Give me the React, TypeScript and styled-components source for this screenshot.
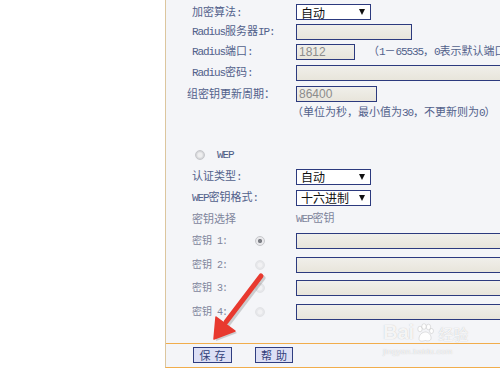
import React from "react";
import styled, { createGlobalStyle } from "styled-components";

const GlobalStyle = createGlobalStyle`
  html, body { margin: 0; padding: 0; background: #ffffff; overflow: hidden; }
  #root { width: 500px; height: 376px; }
`;

const Page = styled.div`
  position: relative;
  width: 500px;
  height: 376px;
  overflow: hidden;
  display: flex;
  align-items: flex-start;
  padding-left: 165px;
  box-sizing: border-box;
  background: #ffffff;
  font-family: "Noto Sans CJK SC", sans-serif;
`;

const Panel = styled.div`
  flex: none;
  width: 360px;
  box-sizing: border-box;
  border-left: 1px solid #dcc69e;
  border-bottom: 1px solid #f1ad4c;
  background: #f4f5f8;
  display: flex;
  flex-direction: column;
`;

const Form = styled.div`
  display: flex;
  flex-direction: column;
  padding: 2px 0 20px 26px;
`;

const Row = styled.div<{ $h: number }>`
  display: flex;
  align-items: center;
  flex: none;
  height: ${(p) => p.$h}px;
  white-space: nowrap;
`;

const Label = styled.div<{ $shift?: number; $muted?: boolean; $size?: number; $w?: number }>`
  flex: none;
  width: ${(p) => (p.$w ?? 104) + (p.$shift ?? 0)}px;
  margin-left: ${(p) => -(p.$shift ?? 0)}px;
  font-size: ${(p) => p.$size ?? 11}px;
  line-height: 1;
  color: ${(p) => (p.$muted ? "#7f859c" : "#52618b")};
  white-space: nowrap;
`;

const Lat = styled.span`
  font-family: "Liberation Mono", monospace;
  letter-spacing: -0.1em;
`;

const Hint = styled.div<{ $ml?: number }>`
  font-size: 11px;
  line-height: 1;
  color: #52618b;
  margin-left: ${(p) => p.$ml ?? 0}px;
  white-space: nowrap;
`;

const Spacer = styled.div<{ $h: number }>`
  flex: none;
  height: ${(p) => p.$h}px;
`;

const SelectBox = styled.div`
  flex: none;
  box-sizing: border-box;
  width: 75px;
  height: 16px;
  border: 1px solid #2c3a7e;
  background: #ffffff;
  display: flex;
  align-items: center;
  justify-content: space-between;
  padding: 0 4px 0 4px;
  font-family: "Noto Sans CJK SC", sans-serif;
  font-size: 12px;
  color: #111111;
`;

const Caret = styled.span`
  width: 0;
  height: 0;
  border-left: 3.5px solid transparent;
  border-right: 3.5px solid transparent;
  border-top: 6px solid #111111;
  margin-right: 1px;
`;

const TextBox = styled.input<{ $w: number }>`
  flex: none;
  box-sizing: border-box;
  width: ${(p) => p.$w}px;
  height: 16px;
  margin: 0;
  border: 1px solid #2c3a7e;
  border-radius: 0;
  outline: none;
  background: linear-gradient(#f0efea, #e8e5db);
  padding: 0 0 0 2px;
  font-family: "Liberation Sans", Arial, sans-serif;
  font-size: 12px;
  color: #8c8c8c;
`;

const Radio = styled.span<{ $checked?: boolean; $faint?: boolean; $ml?: number; $mr?: number }>`
  flex: none;
  box-sizing: border-box;
  width: 10px;
  height: 10px;
  border-radius: 50%;
  margin-left: ${(p) => p.$ml ?? 0}px;
  margin-right: ${(p) => p.$mr ?? 0}px;
  border: 1px solid ${(p) => (p.$faint ? "#e2e3e6" : "#c6c7cb")};
  background: ${(p) =>
    p.$checked
      ? "radial-gradient(circle, #7d7f86 0 1.8px, #e9e9ec 2.4px)"
      : p.$faint
      ? "radial-gradient(circle, #f1f1f3 0 2px, #e6e7ea 3px)"
      : "radial-gradient(circle, #eeeeef 0 2px, #d6d7da 3.5px)"};
`;

const RadioText = styled.span`
  font-family: "Liberation Mono", monospace;
  letter-spacing: -0.1em;
  font-size: 11px;
  color: #4c5a85;
  margin-left: 12px;
`;

const Footer = styled.div`
  flex: none;
  height: 24px;
  border-top: 1px solid #f1ad4c;
  display: flex;
  align-items: flex-start;
  gap: 23px;
  padding: 3px 0 0 27px;
  box-sizing: border-box;
`;

const Button = styled.button<{ $w: number }>`
  flex: none;
  box-sizing: border-box;
  width: ${(p) => p.$w}px;
  height: 16px;
  margin: 0;
  padding: 0;
  border: 1px solid #2f3d80;
  border-radius: 0;
  background: #dcdff5;
  font-family: "Noto Sans CJK SC", sans-serif;
  font-size: 11px;
  line-height: 14px;
  letter-spacing: 4px;
  text-indent: 4px;
  color: #33417a;
`;

const ArrowLayer = styled.svg`
  position: absolute;
  left: 0;
  top: 0;
  pointer-events: none;
`;

const Watermark = styled.div`
  position: absolute;
  left: 383px;
  top: 321px;
  display: flex;
  flex-direction: column;
  align-items: flex-start;
  pointer-events: none;
  color: rgba(255, 255, 255, 0.85);
  text-shadow: 0 0 1px rgba(140, 140, 140, 0.55);
`;

const MarkRow = styled.div`
  display: flex;
  align-items: flex-end;
  gap: 1px;
`;

const MarkBai = styled.span`
  font-family: "Liberation Sans", Arial, sans-serif;
  font-weight: 700;
  font-size: 20px;
  line-height: 22px;
`;

const MarkJy = styled.span`
  font-family: "Noto Sans CJK SC", sans-serif;
  font-size: 15px;
  line-height: 18px;
  margin-left: 2px;
`;

const MarkUrl = styled.span`
  font-family: "Liberation Sans", Arial, sans-serif;
  font-size: 8px;
  line-height: 10px;
  margin-top: 4px;
  letter-spacing: 0.3px;
`;

function Mixed({ text }: { text: string }) {
  const parts = text.split(/([\x20-\x7e]+)/).filter((s) => s.length > 0);
  return (
    <>
      {parts.map((s, i) =>
        /^[\x20-\x7e]+$/.test(s) ? <Lat key={i}>{s}</Lat> : <React.Fragment key={i}>{s}</React.Fragment>
      )}
    </>
  );
}

const keyRows = [
  { n: 1, h: 24, checked: true },
  { n: 2, h: 23, checked: false },
  { n: 3, h: 24, checked: false },
  { n: 4, h: 23, checked: false },
];

export default function App() {
  return (
    <>
      <GlobalStyle />
      <Page>
        <Panel>
          <Form>
            <Row $h={20}>
              <Label><Mixed text="加密算法:" /></Label>
              <SelectBox>自动<Caret /></SelectBox>
            </Row>
            <Row $h={19}>
              <Label><Mixed text="Radius服务器IP:" /></Label>
              <TextBox $w={116} readOnly value="" />
            </Row>
            <Row $h={21}>
              <Label><Mixed text="Radius端口:" /></Label>
              <TextBox $w={59} readOnly value="1812" />
              <Hint $ml={13}><Mixed text="（1－65535，0表示默认端口）" /></Hint>
            </Row>
            <Row $h={21}>
              <Label><Mixed text="Radius密码:" /></Label>
              <TextBox $w={230} readOnly value="" />
            </Row>
            <Row $h={21}>
              <Label $shift={5}>组密钥更新周期：</Label>
              <TextBox $w={81} readOnly value="86400" />
            </Row>
            <Row $h={16}>
              <Label />
              <Hint $ml={-4}><Mixed text="（单位为秒，最小值为30，不更新则为0）" /></Hint>
            </Row>
            <Spacer $h={25} />
            <Row $h={20}>
              <Radio $ml={3} />
              <RadioText>WEP</RadioText>
            </Row>
            <Row $h={23}>
              <Label><Mixed text="认证类型:" /></Label>
              <SelectBox>自动<Caret /></SelectBox>
            </Row>
            <Row $h={19}>
              <Label><Mixed text="WEP密钥格式:" /></Label>
              <SelectBox>十六进制<Caret /></SelectBox>
            </Row>
            <Row $h={22}>
              <Label $muted>密钥选择</Label>
              <Label $muted><Mixed text="WEP密钥" /></Label>
            </Row>
            {keyRows.map((k) => (
              <Row key={k.n} $h={k.h}>
                <Label $muted $size={10} $w={63}>
                  <Mixed text={`密钥 ${k.n}:`} />
                </Label>
                <Radio $checked={k.checked} $faint={!k.checked} $mr={31} />
                <TextBox $w={230} readOnly value="" />
              </Row>
            ))}
          </Form>
          <Footer>
            <Button $w={39}>保存</Button>
            <Button $w={38}>帮助</Button>
          </Footer>
        </Panel>

        <Watermark>
          <MarkRow>
            <MarkBai>Bai</MarkBai>
            <svg width="20" height="20" viewBox="0 0 20 20">
              <g fill="rgba(255,255,255,0.85)" stroke="rgba(150,150,150,0.45)" strokeWidth="0.6">
                <ellipse cx="5" cy="6" rx="2.2" ry="2.8" />
                <ellipse cx="9" cy="3.5" rx="2.2" ry="2.8" />
                <ellipse cx="13.5" cy="4" rx="2.2" ry="2.8" />
                <ellipse cx="16.5" cy="8" rx="2" ry="2.5" />
                <path d="M4 16 C4 11 8 9 10.5 9 C13 9 16.5 11.5 16 15.5 C15.6 18.5 12 18 10.5 17.5 C8.5 18 4 19 4 16 Z" />
              </g>
            </svg>
            <MarkJy>经验</MarkJy>
          </MarkRow>
          <MarkUrl>jingyan.baidu.com</MarkUrl>
        </Watermark>

        <ArrowLayer width="500" height="376" viewBox="0 0 500 376">
          <g opacity="0.25" transform="translate(2 2)">
            <line x1="261" y1="276" x2="226" y2="322" stroke="#555" strokeWidth="5" strokeLinecap="round" />
            <polygon points="214,339 216,317 235,331" fill="#555" />
          </g>
          <line x1="261" y1="276" x2="226" y2="322" stroke="#e8392f" strokeWidth="5" strokeLinecap="round" />
          <polygon points="214,339 216,317 235,331" fill="#e8392f" stroke="#e8392f" strokeWidth="1.5" strokeLinejoin="round" />
        </ArrowLayer>
      </Page>
    </>
  );
}
